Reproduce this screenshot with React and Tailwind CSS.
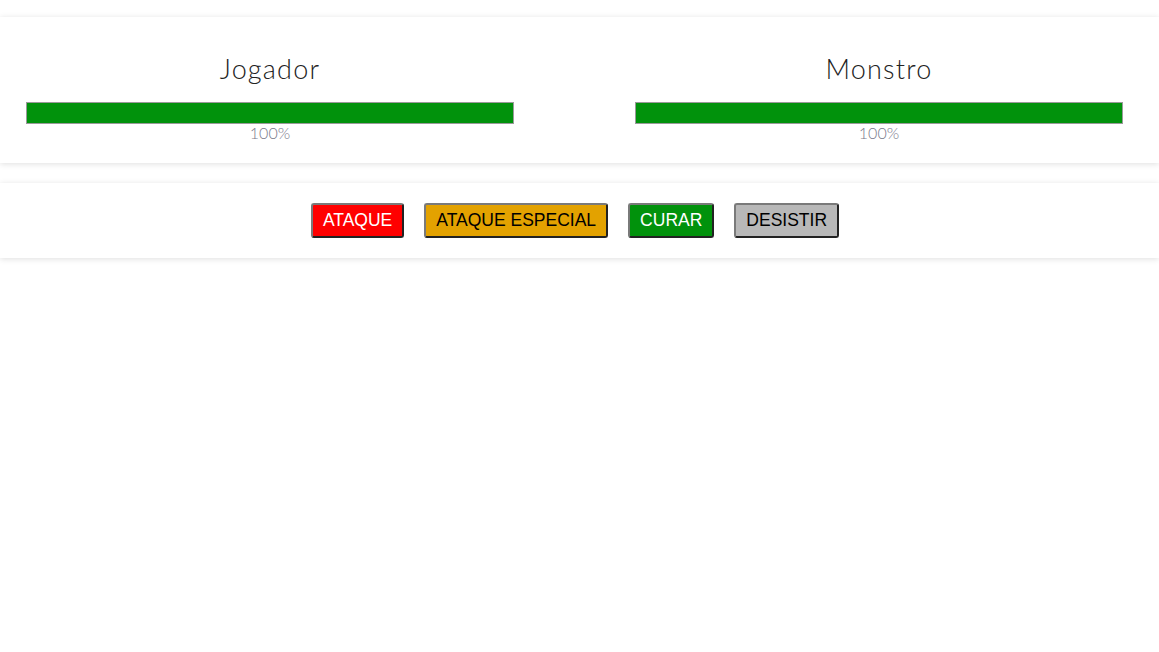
export default function App() {
  const btn =
    "h-[35px] px-[10px] rounded-[3px] border-2 border-t-[#7a7a7a] border-l-[#7a7a7a] border-r-[#222] border-b-[#222] text-[17.5px] leading-none font-['Liberation_Sans',Arial,sans-serif]";
  const Player = ({ name }) => (
    <div className="w-[488px] flex flex-col items-center">
      <div className="h-[34px] text-[27px] leading-[32px] font-light text-[#222] font-['Lato',sans-serif] tracking-[1.2px]">
        {name}
      </div>
      <div className="mt-[15px] w-full h-[22px] border border-[#9a9a9a] bg-[#f2f2f2]">
        <div className="h-full bg-[#01920c]" style={{ width: "100%" }} />
      </div>
      <div className="mt-[-1px] text-[16px] leading-[20px] font-light text-[#7a7a8c] font-['Lato',sans-serif]">
        100%
      </div>
    </div>
  );
  return (
    <div className="min-h-[652px] bg-white pt-[17px]">
      <section className="h-[146px] bg-white shadow-[0_1px_6px_rgba(0,0,0,0.13)] flex pl-[26px] pt-[36px]">
        <Player name="Jogador" />
        <div className="w-[121px]" />
        <Player name="Monstro" />
      </section>
      <section className="mt-[20px] h-[75px] bg-white shadow-[0_1px_6px_rgba(0,0,0,0.13)] flex items-center justify-center gap-[20px] pr-[9px]">
        <button className={`${btn} bg-[#ff0000] text-white`}>ATAQUE</button>
        <button className={`${btn} bg-[#e3a200] text-black`}>ATAQUE ESPECIAL</button>
        <button className={`${btn} bg-[#01920c] text-white`}>CURAR</button>
        <button className={`${btn} bg-[#b8b8b8] text-black`}>DESISTIR</button>
      </section>
    </div>
  );
}
